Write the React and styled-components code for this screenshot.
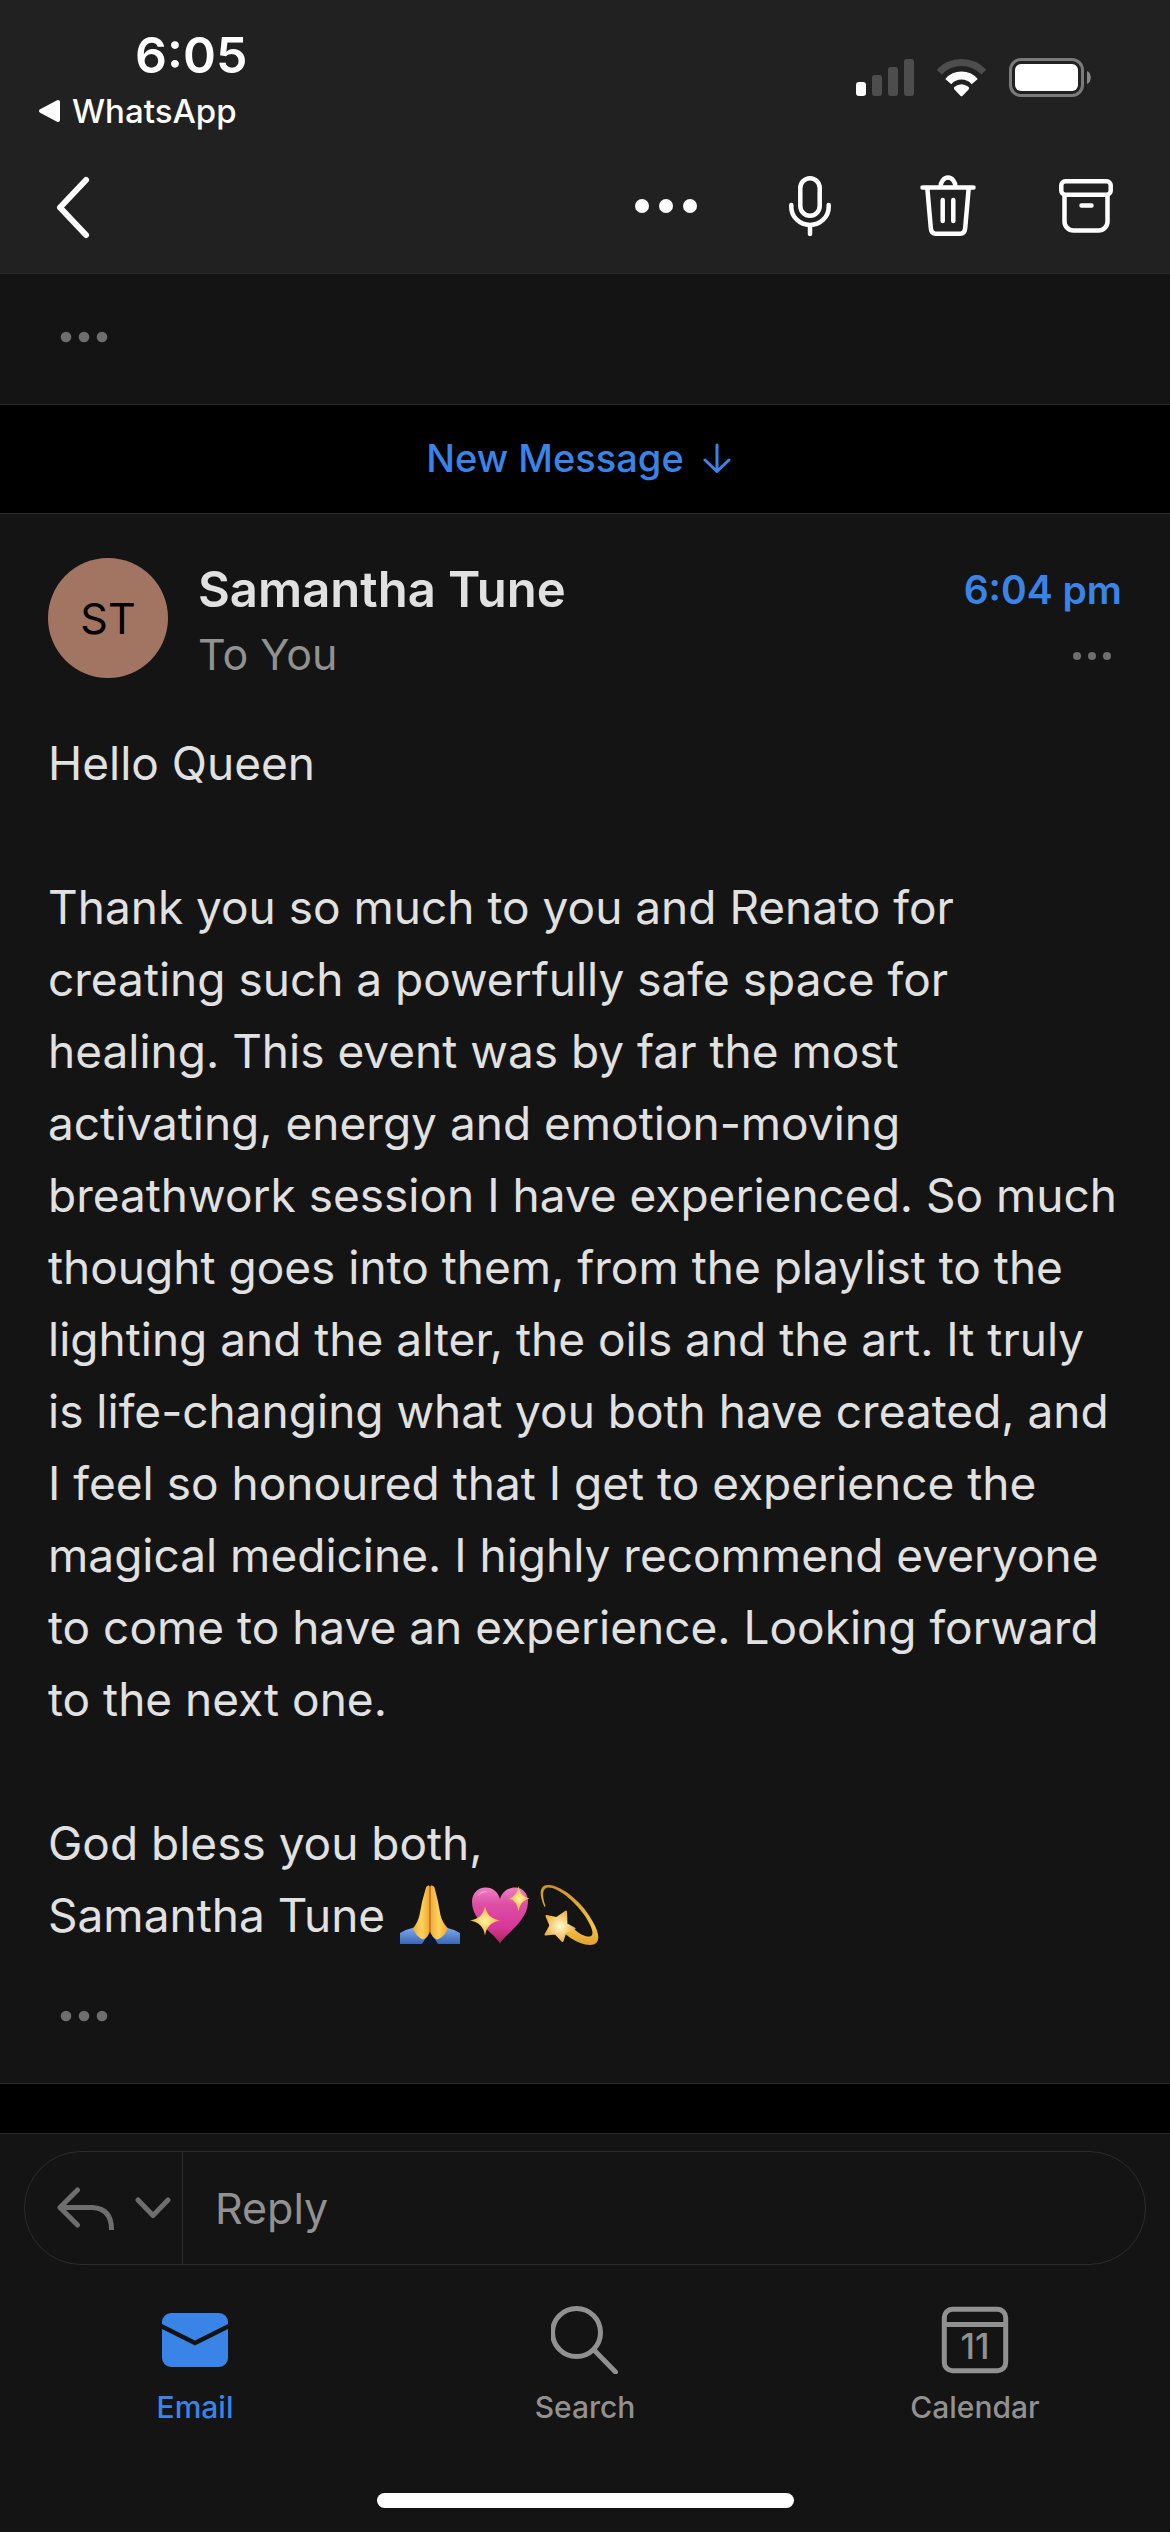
import React from 'react'
import styled, { createGlobalStyle } from 'styled-components'

const colors = {
  bar: '#212121',
  surface: '#141414',
  line: '#2b2b2b',
  text: '#e1e1e1',
  muted: '#919191',
  dim: '#6e6e6e',
  blue: '#3a84e8'
}

const GlobalStyle = createGlobalStyle`
  * {
    box-sizing: border-box;
  }

  body {
    background: #000;
    color: ${colors.text};
    font-family: Inter, 'Liberation Sans', sans-serif;
    margin: 0;
  }

  button,
  input {
    background: none;
    border: 0;
    color: inherit;
    font: inherit;
    padding: 0;
  }

  svg {
    display: block;
  }
`

const Screen = styled.div`
  display: flex;
  flex-direction: column;
  min-height: 100vh;
`

const Header = styled.header`
  background: ${colors.bar};
  border-bottom: 1px solid ${colors.line};
`

const StatusBar = styled.div`
  align-items: center;
  color: #fff;
  display: flex;
  height: 141px;
  justify-content: space-between;
  padding: 16px 78px 0 38px;
`

const Clock = styled.div`
  font-size: 50px;
  font-weight: 600;
  line-height: 64px;
  padding-left: 97px;
`

const BackToApp = styled.a`
  align-items: center;
  color: inherit;
  display: flex;
  font-size: 33px;
  font-weight: 500;
  gap: 12px;
  line-height: 48px;
  text-decoration: none;
`

const StatusIcons = styled.div`
  align-items: center;
  display: flex;
  gap: 22px;
  padding-bottom: 2px;
`

const Toolbar = styled.nav`
  align-items: center;
  color: #fff;
  display: flex;
  height: 132px;
  justify-content: space-between;
  padding: 0 15px 0 4px;
`

const ToolbarActions = styled.div`
  display: flex;
`

const ToolButton = styled.button`
  display: flex;
  justify-content: center;
  width: ${props => (props.$wide ? '150px' : '138px')};
`

const Collapsed = styled.section`
  background: ${colors.surface};
  border-bottom: 1px solid ${colors.line};
  padding: 46px 48px 50px;
`

const MoreButton = styled.button`
  align-items: center;
  color: ${colors.dim};
  display: flex;
  height: ${props => (props.$small ? '40px' : '34px')};
  width: ${props => (props.$small ? '60px' : '72px')};
  justify-content: center;
`

const NewMessage = styled.button`
  align-items: center;
  color: ${colors.blue};
  display: flex;
  font-size: 38px;
  font-weight: 500;
  gap: 18px;
  height: 108px;
  justify-content: center;
  padding: 0 12px 2px 0;
  width: 100%;
`

const Message = styled.article`
  background: ${colors.surface};
  border: solid ${colors.line};
  border-width: 1px 0;
  padding: 44px 48px 50px;
`

const MessageHeader = styled.header`
  display: flex;
  gap: 30px;
  margin-bottom: 41px;
`

const Avatar = styled.div`
  align-items: center;
  background: #a27563;
  border-radius: 50%;
  color: #000;
  display: flex;
  flex: none;
  font-size: 43px;
  height: 120px;
  justify-content: center;
  width: 120px;
`

const Sender = styled.div`
  flex: 1;
`

const SenderName = styled.h1`
  font-size: 49px;
  font-weight: 600;
  line-height: 64px;
  margin: 0;
`

const Recipient = styled.p`
  color: ${colors.muted};
  font-size: 43px;
  line-height: 64px;
  margin: 0;
`

const Meta = styled.div`
  align-items: flex-end;
  display: flex;
  flex-direction: column;
  gap: 14px;
`

const SentAt = styled.time`
  color: ${colors.blue};
  font-size: 39px;
  font-weight: 600;
  line-height: 64px;
`

const Body = styled.div`
  font-size: 46px;
  line-height: 72px;
  margin-bottom: 48px;

  p {
    margin: 0 0 72px;
  }

  p:last-child {
    margin: 0;
  }
`

const Emojis = styled.span`
  display: inline-flex;
  gap: 10px;
  padding: 6px 2px 0;
  vertical-align: top;
`

const Gap = styled.div`
  flex: 1;
  min-height: 48px;
`

const Footer = styled.footer`
  background: ${colors.surface};
  border-top: 1px solid ${colors.line};
  padding: 17px 0 24px;
`

const ReplyBox = styled.div`
  border: 1px solid ${colors.line};
  border-radius: 57px;
  display: flex;
  height: 114px;
  margin: 0 24px 41px;
`

const ReplyMode = styled.button`
  align-items: center;
  border-right: 1px solid ${colors.line};
  color: ${colors.dim};
  display: flex;
  gap: 20px;
  padding: 0 11px 0 32px;
`

const ReplyInput = styled.input`
  flex: 1;
  font-size: 43px;
  min-width: 0;
  outline: none;
  padding: 0 32px;

  &::placeholder {
    color: ${colors.muted};
    opacity: 1;
  }
`

const Tabs = styled.nav`
  display: grid;
  grid-template-columns: repeat(3, 1fr);
  margin-bottom: 66px;
`

const Tab = styled.a`
  align-items: center;
  color: ${props => (props.$active ? colors.blue : colors.muted)};
  display: flex;
  flex-direction: column;
  font-size: 30px;
  font-weight: 500;
  gap: 13px;
  line-height: 40px;
  text-decoration: none;
`

const HomeIndicator = styled.div`
  background: #fff;
  border-radius: 8px;
  height: 15px;
  margin: 0 auto;
  width: 417px;
`

const Icon = ({ w = 66, h = 66, stroke = 5, children }) => (
  <svg
    width={w}
    height={h}
    viewBox={`0 0 ${w} ${h}`}
    fill='none'
    stroke='currentColor'
    strokeWidth={stroke}
    strokeLinecap='round'
    strokeLinejoin='round'
    aria-hidden='true'
  >
    {children}
  </svg>
)

const Dots = ({ r, step }) => (
  <Icon w={48} h={16} stroke={0}>
    {[-step, 0, step].map(dx => (
      <circle key={dx} cx={24 + dx} cy='8' r={r} fill='currentColor' />
    ))}
  </Icon>
)

const Signal = () => (
  <Icon w={58} h={38} stroke={0}>
    <rect x='0' y='23' width='10' height='14' rx='3' fill='#fff' />
    <rect x='16' y='16' width='10' height='21' rx='3' fill='#4d4d4d' />
    <rect x='32' y='8' width='10' height='29' rx='3' fill='#4d4d4d' />
    <rect x='48' y='0' width='10' height='37' rx='3' fill='#4d4d4d' />
  </Icon>
)

const Wifi = () => (
  <svg width='51' height='38' viewBox='0 0 51 38' fill='none' aria-hidden='true'>
    <path d='M3.2 13.2a30.5 30.5 0 0 1 44.6 0' stroke='#4d4d4d' strokeWidth='7' />
    <path d='M12.3 22.6a17.5 17.5 0 0 1 26.4 0' stroke='#fff' strokeWidth='8' />
    <path
      d='M24.4 36.8L18.4 30.4q-1.2-1.4.2-2.6q6.9-5.2 13.8 0q1.4 1.2.2 2.6L26.6 36.8q-1.1 1-2.2 0z'
      fill='#fff'
    />
  </svg>
)

const Battery = () => (
  <svg width='83' height='40' viewBox='0 0 83 40' fill='none' aria-hidden='true'>
    <rect x='1.5' y='1.5' width='72' height='36' rx='10.5' stroke='#7a7a7a' strokeWidth='3' />
    <rect x='6' y='6' width='63' height='27' rx='6' fill='#fff' />
    <path d='M78 13c5 2 5 11 0 13z' fill='#8a8a8a' />
  </svg>
)

const PrayIcon = () => (
  <svg width='60' height='60' viewBox='0 0 60 60' role='img' aria-label='Folded hands'>
    <defs>
      <linearGradient id='skin' x1='0' x2='1'>
        <stop offset='0' stopColor='#f2a93b' />
        <stop offset='.5' stopColor='#fdd45c' />
        <stop offset='1' stopColor='#f0a232' />
      </linearGradient>
      <linearGradient id='sleeve' x1='0' x2='0' y1='0' y2='1'>
        <stop offset='0' stopColor='#7eaaf0' />
        <stop offset='1' stopColor='#3a66b4' />
      </linearGradient>
    </defs>
    <path d='M0 48Q7 44 14 42.5L26 54l-2 5H0z' fill='url(#sleeve)' />
    <path d='M60 48Q53 44 46 42.5L34 54l2 5h24z' fill='url(#sleeve)' />
    <path d='M22 59l5-8h6l5 8z' fill='#0b1730' />
    <path
      d='M26 2.5Q27 0 29 .5L30 2v44q-2 7-7 8.5q-7-3-10-11Q18 37 19.5 30Q22 15 26 2.5z'
      fill='url(#skin)'
    />
    <path
      d='M34.5 2.5Q33 0 31 .5L30 2v44q2 7 7 8.5q8-3 11-11Q42 37 40.5 30Q38 15 34.5 2.5z'
      fill='url(#skin)'
    />
    <path d='M30 2v45' stroke='#b8731c' strokeWidth='1.5' />
  </svg>
)

const HeartIcon = () => (
  <svg width='60' height='60' viewBox='0 0 60 60' role='img' aria-label='Sparkling heart'>
    <defs>
      <linearGradient id='heart' x1='0' x2='0' y1='0' y2='1'>
        <stop offset='0' stopColor='#f07ec4' />
        <stop offset='.3' stopColor='#dd4fa4' />
        <stop offset='.7' stopColor='#d8389a' />
        <stop offset='1' stopColor='#b02458' />
      </linearGradient>
      <radialGradient id='spark'>
        <stop offset='0' stopColor='#fff3a0' />
        <stop offset='1' stopColor='#f3ae38' />
      </radialGradient>
    </defs>
    <path
      d='M30 58.5C26 50 2 36 2 17C2 8 8 2.5 15.5 2.5C23 2.5 28 7 30 14C32 7 38 2.5 45 2.5C52.5 2.5 58 8 58 17C58 36 34 50 30 58.5z'
      fill='url(#heart)'
    />
    <path d='M7 12q4-8 12-5q-8 0-12 5z' fill='#fbc4e4' opacity='.7' />
    <path d='M15 21q2 12.5 15 14.5q-13 2-15 15q-2-13-15-15q13-2 15-14.5z' fill='url(#spark)' />
    <path d='M48.5 1q1.5 10.5 11 12.5q-9.5 2-11 13q-1.5-11-9.5-13q8-2 9.5-12.5z' fill='url(#spark)' />
  </svg>
)

const DizzyIcon = () => (
  <svg width='60' height='60' viewBox='0 0 60 60' role='img' aria-label='Dizzy star'>
    <defs>
      <linearGradient id='trail' x1='0' x2='0' y1='0' y2='1'>
        <stop offset='0' stopColor='#c8902c' />
        <stop offset='.7' stopColor='#f5c443' />
        <stop offset='1' stopColor='#e0a035' />
      </linearGradient>
      <radialGradient id='star'>
        <stop offset='0' stopColor='#fffbd0' />
        <stop offset='1' stopColor='#f0b548' />
      </radialGradient>
    </defs>
    <path
      d='M4.5 22C-1 10-1 1 7 0C20-1 43 17 53 37C61 51 60 60 50 60C43 60 33 56 24 48L33 43C40 50 48 53 51 51C55 48 50 39 45 31C34 15 17 2 8 2.5C2 3 2 12 5.5 21z'
      fill='url(#trail)'
    />
    <path
      d='M26 26.5l.5 12.5l8 4.5l-9 3.5l-3 9l-7-7.5l-10 1l5-9l-4-9.5l10 2z'
      fill='url(#star)'
      stroke='url(#star)'
      strokeWidth='2'
      strokeLinejoin='round'
    />
  </svg>
)

const App = () => (
  <Screen>
    <GlobalStyle />
    <Header>
      <StatusBar>
        <div>
          <Clock>6:05</Clock>
          <BackToApp href='#whatsapp'>
            <Icon w={22} h={24} stroke={4}>
              <path d='M3 12L20 3v18z' fill='currentColor' />
            </Icon>
            WhatsApp
          </BackToApp>
        </div>
        <StatusIcons>
          <Signal />
          <Wifi />
          <Battery />
        </StatusIcons>
      </StatusBar>
      <Toolbar>
        <ToolButton aria-label='Back'>
          <Icon stroke={6}>
            <path d='M46 6L20 33.5L46 61' />
          </Icon>
        </ToolButton>
        <ToolbarActions>
          <ToolButton $wide aria-label='More actions'>
            <Icon stroke={0}>
              <circle cx='9' cy='32' r='7' fill='currentColor' />
              <circle cx='33' cy='32' r='7' fill='currentColor' />
              <circle cx='57' cy='32' r='7' fill='currentColor' />
            </Icon>
          </ToolButton>
          <ToolButton aria-label='Dictate'>
            <Icon stroke={4.5}>
              <rect x='23.3' y='4.3' width='19.4' height='37.4' rx='9.7' />
              <path d='M14.3 31v2a18.7 18 0 0 0 37.4 0v-2M33 51v9' />
            </Icon>
          </ToolButton>
          <ToolButton aria-label='Delete'>
            <Icon stroke={4.5}>
              <path d='M7.5 13.5h51M25.5 13a7.5 9.5 0 0 1 15 0M12.3 14l3.5 40q.5 5.7 5 5.7h24.4q4.5 0 5-5.7l3.5-40M27.7 26v21M38.3 26v21' />
            </Icon>
          </ToolButton>
          <ToolButton aria-label='Archive'>
            <Icon stroke={4.5}>
              <rect x='8.3' y='7.3' width='49.4' height='13.4' rx='4' />
              <path d='M11.5 21v26.5a9 9 0 0 0 9 9h25a9 9 0 0 0 9-9V21M28.5 31.5h10' />
            </Icon>
          </ToolButton>
        </ToolbarActions>
      </Toolbar>
    </Header>

    <Collapsed>
      <MoreButton aria-label='Show previous message'>
        <Dots r={5.3} step={18} />
      </MoreButton>
    </Collapsed>

    <NewMessage>
      New Message
      <Icon w={30} h={30} stroke={3}>
        <path d='M15 2v26M3 17l12 11.5L27 17' />
      </Icon>
    </NewMessage>

    <Message>
      <MessageHeader>
        <Avatar>ST</Avatar>
        <Sender>
          <SenderName>Samantha Tune</SenderName>
          <Recipient>To You</Recipient>
        </Sender>
        <Meta>
          <SentAt>6:04 pm</SentAt>
          <MoreButton $small aria-label='Message options'>
            <Dots r={4} step={15} />
          </MoreButton>
        </Meta>
      </MessageHeader>
      <Body>
        <p>Hello Queen</p>
        <p>
          Thank you so much to you and Renato for creating such a powerfully
          safe space for healing. This event was by far the most activating,
          energy and emotion-moving breathwork session I have experienced. So
          much thought goes into them, from the playlist to the lighting and the
          alter, the oils and the art. It truly is life-changing what you both
          have created, and I feel so honoured that I get to experience the
          magical medicine. I highly recommend everyone to come to have an
          experience. Looking forward to the next one.
        </p>
        <p>
          God bless you both,
          <br />
          Samantha Tune{' '}
          <Emojis>
            <PrayIcon />
            <HeartIcon />
            <DizzyIcon />
          </Emojis>
        </p>
      </Body>
      <MoreButton aria-label='Show quoted text'>
        <Dots r={5.3} step={18} />
      </MoreButton>
    </Message>

    <Gap />

    <Footer>
      <ReplyBox>
        <ReplyMode aria-label='Reply options'>
          <Icon w={58} h={44}>
            <path d='M20.5 4L3 21.5L20.5 39M3 21.5h32.5q19 1 19 22' />
          </Icon>
          <Icon w={36} h={24}>
            <path d='M3 4l15 15.5L33 4' />
          </Icon>
        </ReplyMode>
        <ReplyInput placeholder='Reply' aria-label='Reply' />
      </ReplyBox>
      <Tabs>
        <Tab href='#email' $active>
          <Icon w={68} h={68} stroke={0}>
            <path d='M1 17v-1a9 9 0 0 1 9-9h48a9 9 0 0 1 9 9v2L34 34.5L1 18z' fill='currentColor' />
            <path d='M1 23l33 16.5L67 23v29a9 9 0 0 1-9 9H10a9 9 0 0 1-9-9z' fill='currentColor' />
          </Icon>
          Email
        </Tab>
        <Tab href='#search'>
          <Icon w={68} h={68}>
            <circle cx='25.5' cy='26.5' r='24' />
            <path d='M43 44l21.5 22' />
          </Icon>
          Search
        </Tab>
        <Tab href='#calendar'>
          <Icon w={68} h={68}>
            <rect x='3.3' y='3.3' width='61.4' height='61.4' rx='8' />
            <path d='M4 18.5h60' />
            <text
              x='34'
              y='53'
              textAnchor='middle'
              fontSize='35'
              fontWeight='500'
              fill='currentColor'
              stroke='none'
            >
              11
            </text>
          </Icon>
          Calendar
        </Tab>
      </Tabs>
      <HomeIndicator />
    </Footer>
  </Screen>
)

export default App
